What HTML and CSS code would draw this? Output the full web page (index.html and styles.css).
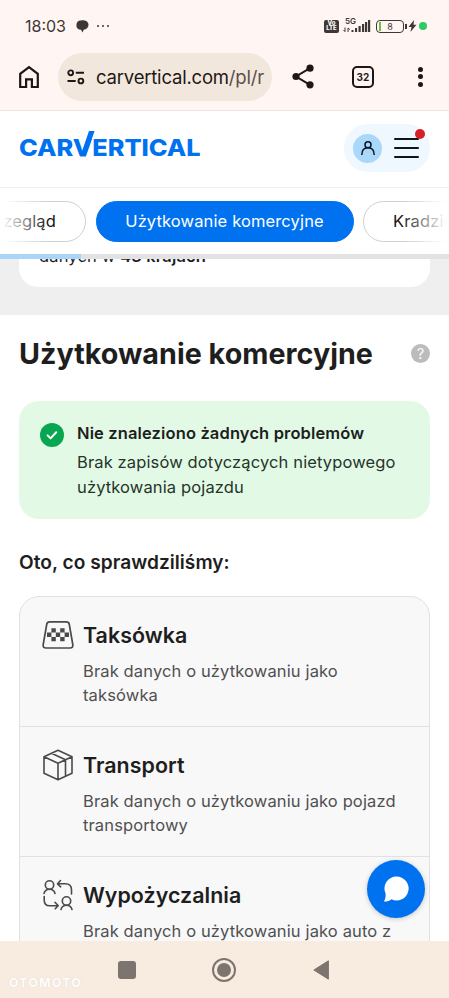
FILE: index.html
```html
<!DOCTYPE html>
<html lang="pl">
<head>
<meta charset="utf-8">
<meta name="viewport" content="width=device-width, initial-scale=1">
<title>carVertical – Użytkowanie komercyjne</title>
<link rel="stylesheet" href="styles.css">
</head>
<body>
<div class="phone">
  <div class="status">
    <span class="clock">18:03</span>
    <svg class="chat-ind" width="13" height="13" viewBox="0 0 13 13"><path d="M3 .8C5 0 9 0 11 1.500c2 1.500 2 5 0 6.800-.8.8-2 1.200-3.200 1.300L6.500 12.500 5 9.800C2 9.800.4 7.800.4 5.400.4 3 1.200 1.500 3 .8z" fill="#3d3836"/></svg>
    <span class="dots"><i></i><i></i><i></i></span>
    <span class="volte"><b>Vo</b><b>LTE</b></span>
    <span class="signal">
      <span class="net">5G</span>
      <svg width="28" height="14" viewBox="0 0 28 14"><g fill="#3d3836"><path d="M8.500 11h2v2h-2zM12 9h2.100v4H12zM15.500 7h2.200v6h-2.200zM19 5h2.200v8H19zM22 3h2.200v10H22zM25 1h2.200v12H25z"/></g><path d="M2 8.500v4M.5 11 2 12.700M5 13V9l1.800 1.500" stroke="#3d3836" fill="none"/></svg>
    </span>
    <span class="battery"><span>8</span></span>
    <svg class="bolt" width="9" height="12" viewBox="0 0 9 12"><path d="M6 0 .5 7h3L2.500 12 8.500 4.800h-3z" fill="#3d3836"/></svg>
    <span class="live"></span>
  </div>

  <div class="browser">
    <svg class="home" width="22" height="24" viewBox="0 0 22 24"><path d="M2.200 22V8.800L11 2.200l8.800 6.600V22h-5.900v-7.600H8.100V22z" fill="none" stroke="#1d1715" stroke-width="2.200"/></svg>
    <div class="address">
      <svg width="18" height="16" viewBox="0 0 18 16"><g fill="none" stroke="#1d1715" stroke-width="1.900"><circle cx="3.700" cy="3.800" r="2.400"/><path d="M8.800 3.800H17M.5 12h8.200"/><circle cx="13.900" cy="12" r="2.400"/></g></svg>
      <span class="url">carvertical.com<em>/pl/r</em></span>
    </div>
    <svg class="share" width="22" height="25" viewBox="0 0 22 25"><path d="m18 4.200-14 8.300 14 8.300" fill="none" stroke="#1d1715" stroke-width="2"/><g fill="#1d1715"><circle cx="18" cy="4.200" r="3.600"/><circle cx="4" cy="12.500" r="3.600"/><circle cx="18" cy="20.800" r="3.600"/></g></svg>
    <span class="tabcount">32</span>
    <span class="kebab"><i></i><i></i><i></i></span>
  </div>

  <header class="site">
    <div class="logo"><span class="word">CARVERTICAL</span><svg class="tick" width="20" height="26" viewBox="0 0 20 26"><path d="M13 0h5.600L9.800 25.500H4.200z" fill="#0072f0"/></svg></div>
    <div class="account">
      <span class="avatar"><svg width="16" height="16" viewBox="0 0 16 16"><g fill="none" stroke="#0c1622" stroke-width="1.500"><circle cx="8" cy="4.800" r="3"/><path d="M1.800 15c0-4.600 2.500-7.200 6.200-7.200s6.200 2.600 6.200 7.200"/></g></svg></span>
      <span class="burger"><i></i><i></i><i></i></span>
      <span class="alert"></span>
    </div>
  </header>

  <nav class="tabs">
    <a class="tab prev">Przegląd</a>
    <a class="tab active">Użytkowanie komercyjne</a>
    <a class="tab next">Kradzież</a>
  </nav>
  <div class="progress"><div class="bar"></div></div>

  <section class="previous"><div class="card"><p>danych w <b>43 krajach</b></p></div></section>

  <main>
    <div class="title"><h1>Użytkowanie komercyjne</h1><span class="help">?</span></div>
    <div class="notice">
      <svg width="24" height="24" viewBox="0 0 24 24"><circle cx="12" cy="12" r="12" fill="#08a650"/><path d="m7.600 12.400 3 3 5.600-6.100" fill="none" stroke="#fff" stroke-width="2" stroke-linecap="round" stroke-linejoin="round"/></svg>
      <div><h2>Nie znaleziono żadnych problemów</h2><p class="l1">Brak zapisów dotyczących nietypowego</p><p>użytkowania pojazdu</p></div>
    </div>
    <h3 class="lead">Oto, co sprawdziliśmy:</h3>
    <div class="list">
      <article>
        <svg class="ic" width="32" height="32" viewBox="0 0 32 32"><path d="M7.500 2.800h17c1.500 0 2.400.8 2.700 2.200L30.800 25.500c.4 2.400-.7 3.500-2.800 3.500H4c-2.100 0-3.200-1.100-2.800-3.500L4.800 5c.3-1.400 1.200-2.200 2.700-2.200z" fill="none" stroke="#4a4a4a" stroke-width="1.700"/><path d="M9.400 9.300h4.400v4.300H9.400zM18.200 9.300h4.400v4.300h-4.400zM5 13.600h4.400v4.300H5zM13.800 13.600h4.400v4.300h-4.400zM22.600 13.600H27v4.300h-4.400zM9.400 17.900h4.400v4.300H9.400zM18.200 17.900h4.400v4.300h-4.400z" fill="#4a4a4a"/></svg>
        <div><h4>Taksówka</h4><p>Brak danych o użytkowaniu jako</p><p>taksówka</p></div>
      </article>
      <article>
        <svg class="ic" width="32" height="32" viewBox="0 0 32 32"><g fill="none" stroke="#4a4a4a" stroke-width="1.600" stroke-linejoin="round"><path d="m16 1.200 14 6.500v16.500L16 30.700l-14-6.500V7.700zM2 7.700l14 6.500 14-6.500M16 14.200v16.500M9.500 4.300l14 6.500v16.400"/></g></svg>
        <div><h4>Transport</h4><p>Brak danych o użytkowaniu jako pojazd</p><p>transportowy</p></div>
      </article>
      <article>
        <svg class="ic" width="32" height="32" viewBox="0 0 32 32"><g fill="none" stroke="#4a4a4a" stroke-width="1.600" stroke-linecap="round" stroke-linejoin="round"><circle cx="7.500" cy="6" r="4.200"/><path d="M2 14.500c.7-2.800 2.700-4.200 5.500-4.200s4.800 1.400 5.500 4.200M18.500 1.500 15.500 4.800l3.200 3M15.800 4.800h7.500c4 0 6.200 2 6.200 6V15"/><circle cx="24.500" cy="22" r="4.200"/><path d="M19 30.500c.7-2.800 2.700-4.200 5.500-4.200s4.800 1.400 5.500 4.200M2.200 17.500V21c0 4 2 5.800 5.500 5.800h8M13 23.300l3.200 3.500-3 3"/></g></svg>
        <div><h4>Wypożyczalnia</h4><p>Brak danych o użytkowaniu jako auto z</p></div>
      </article>
    </div>
  </main>

  <footer class="sysnav">
    <span class="recent"></span>
    <span class="circle"><i></i></span>
    <svg class="back" width="17" height="20" viewBox="0 0 17 20"><path d="M15.400.8v18.400L.9 10z" fill="#7c746f" stroke="#7c746f" stroke-linejoin="round"/></svg>
    <span class="mark">OTOMOTO</span>
  </footer>
  <button class="fab" aria-label="Czat"><svg width="28" height="28" viewBox="0 0 28 28"><path d="M14.500 1.500a12 12 0 1 1-5.100 22.800c-1.400 1.600-4 2.200-7.600 2.300 1.400-2.200 2-4 1.800-8A12 12 0 0 1 14.500 1.500z" fill="#fff"/></svg></button>
</div>
</body>
</html>
```
FILE: styles.css
```css
* { box-sizing: border-box; }
body { margin: 0; font-family: Inter, sans-serif; color: #1e1e1e; background: #fff; }
h1, h2, h3, h4, p { margin: 0; white-space: nowrap; }
svg { display: block; flex: none; }
.phone { position: relative; width: 449px; height: 998px; overflow: hidden; display: flex; flex-direction: column; }
.phone > * { flex: none; }

.status { height: 52px; background: #fff6f3; display: flex; align-items: center; padding-left: 25px; color: #3d3836; }
.clock { font-size: 16px; width: 41px; white-space: nowrap; }
.chat-ind { margin-left: 10px; }
.dots { display: flex; gap: 3px; margin-left: 8px; width: 13px; }
.dots i { width: 2px; height: 2px; background: #3d3836; border-radius: 50%; }
.volte { margin-left: 214px; width: 15px; height: 13px; border-radius: 2px; background: #3d3836; color: #fff; font-size: 6px; line-height: 6px; text-align: center; display: flex; flex-direction: column; }
.volte b { font-weight: 800; height: 5.500px; }
.signal { position: relative; margin-left: 4px; }
.net { position: absolute; left: 2px; top: -2px; font-size: 8px; line-height: 9px; font-weight: 600; }
.battery { position: relative; margin-left: 5px; width: 28px; height: 13px; border: 1.500px solid #3d3836; border-radius: 4px; font-size: 9px; line-height: 11px; text-align: center; }
.battery::before { content: ""; position: absolute; left: 2px; top: 1px; width: 1.500px; height: 9px; background: #6fc13d; }
.battery::after { content: ""; position: absolute; right: -3.500px; top: 3px; width: 1.500px; height: 5px; background: #3d3836; }
.bolt { margin-left: 4px; }
.live { margin-left: 2px; width: 8px; height: 8px; border-radius: 50%; background: #2fca62; }

.browser { height: 59px; background: #fff6f3; border-bottom: 1px solid #ece4df; display: flex; align-items: center; padding: 0 0 9px 18px; }
.address { margin-left: 18px; width: 214px; height: 48px; border-radius: 24px; background: #f2e7dd; display: flex; align-items: center; padding-left: 9px; }
.url { margin-left: 11px; padding-top: 1px; font-size: 18.500px; letter-spacing: -.2px; color: #1d1715; white-space: nowrap; }
.url em { font-style: normal; color: #5a504b; }
.share { margin-left: 20px; }
.tabcount { margin-left: 38px; width: 22px; height: 22px; border: 2px solid #1d1715; border-radius: 5px; font-size: 10px; font-weight: 700; line-height: 18px; text-align: center; }
.kebab { margin-left: 44px; display: flex; flex-direction: column; gap: 2.500px; }
.kebab i { width: 5px; height: 5px; border-radius: 50%; background: #1d1715; }

.site { height: 77px; border-bottom: 1px solid #f0f0f0; display: flex; justify-content: space-between; align-items: center; padding: 0 19px; }
.logo { position: relative; width: 181px; height: 27px; color: #0072f0; margin-top: -3px; }
.word { display: block; font-size: 23.500px; font-weight: 800; line-height: 27px; transform-origin: 0 0; transform: scaleX(1.077); white-space: nowrap; }
.tick { position: absolute; left: 57px; top: -3px; }
.account { position: relative; width: 86px; height: 48px; margin-top: -2px; border-radius: 24px; background: #eff7ff; display: flex; align-items: center; padding-left: 9px; }
.avatar { width: 29px; height: 29px; border-radius: 50%; background: #a9d8fb; display: flex; align-items: center; justify-content: center; }
.burger { margin-left: 12px; width: 25px; display: flex; flex-direction: column; gap: 7px; }
.burger i { height: 2px; background: #10151b; border-radius: 1px; }
.alert { position: absolute; left: 71px; top: 5px; width: 10px; height: 10px; border-radius: 50%; background: #d71f26; }

.tabs { position: relative; height: 66px; display: flex; align-items: center; gap: 9.500px; overflow: hidden; }
.tab { height: 41px; border-radius: 21px; border: 1px solid #cfcfcf; font-size: 16.500px; letter-spacing: .13px; line-height: 39px; white-space: nowrap; flex: none; color: #161616; }
.prev { width: 130px; margin-left: -44px; padding-right: 29px; text-align: right; }
.active { width: 258px; background: #0072f0; border-color: #0072f0; color: #fff; text-align: center; }
.next { width: 130px; padding-left: 29px; }
.tabs::before, .tabs::after { content: ""; position: absolute; top: 0; bottom: 0; width: 48px; }
.tabs::before { left: 0; background: linear-gradient(to right, #fff 5%, #fff0); }
.tabs::after { right: 0; background: linear-gradient(to left, #fff 5%, #fff0); }
.progress { height: 5px; background: #e2e2e2; }
.bar { height: 5px; width: 81px; background: #a9d5f8; }

.previous { height: 56px; background: #efefef; padding: 0 19px; overflow: hidden; }
.card { height: 28px; background: #fff; border-radius: 0 0 19px 19px; padding-left: 20px; overflow: hidden; }
.card p { margin-top: -14px; font-size: 16.500px; letter-spacing: .15px; line-height: 22px; }
.card b { font-weight: 600; }

main { padding: 0 19px; height: 626px; overflow: hidden; }
.title { height: 86px; padding-bottom: 9px; display: flex; align-items: center; justify-content: space-between; }
h1 { font-size: 28.650px; letter-spacing: .04px; font-weight: 700; line-height: 36px; }
.help { width: 19px; height: 19px; border-radius: 50%; background: #bcbcbc; color: #fff; font-size: 14px; line-height: 19px; text-align: center; }
.notice { height: 117.500px; border-radius: 20px; background: #e2fae5; padding: 18px 0 0 21px; display: flex; gap: 13px; }
.notice svg { margin-top: 4px; }
.notice h2 { font-size: 16.500px; letter-spacing: .13px; font-weight: 600; line-height: 28px; }
.notice p { font-size: 16.500px; letter-spacing: .13px; line-height: 25px; color: #26342a; }
.notice .l1 { padding-top: 3px; }
.lead { margin-top: 29px; font-size: 19.100px; letter-spacing: .04px; font-weight: 600; line-height: 28px; }
.list { margin-top: 20px; border: 1px solid #e1e1e1; border-radius: 20px; background: #f8f8f8; height: 400px; }
article { height: 130.200px; border-bottom: 1px solid #e1e1e1; display: flex; gap: 9px; padding: 23px 0 0 22px; }
.ic { margin-top: -1px; }
h4 { font-size: 21.400px; letter-spacing: .04px; font-weight: 600; line-height: 30px; }
article p { font-size: 16.500px; letter-spacing: .13px; line-height: 24px; color: #505050; }
article h4 + p { margin-top: 9px; }

.sysnav { position: relative; height: 57px; background: #f8ebe0; display: flex; align-items: center; padding-left: 118px; }
.recent { width: 18px; height: 18px; border-radius: 3px; background: #7c746f; }
.circle { margin-left: 76px; width: 24px; height: 24px; border: 2px solid #7c746f; border-radius: 50%; display: flex; align-items: center; justify-content: center; }
.circle i { width: 14px; height: 14px; border-radius: 50%; background: #7c746f; }
.back { margin-left: 77px; }
.mark { position: absolute; left: 9px; top: 34px; color: #fff; font-size: 12px; line-height: 16px; font-weight: 700; letter-spacing: 1.500px; text-shadow: 0 0 1px #d8cbc0; }
.fab { position: absolute; left: 367px; top: 860px; width: 58px; height: 58px; border: 0; padding: 0; border-radius: 50%; background: #0072f0; display: flex; align-items: center; justify-content: center; box-shadow: 0 1px 5px #0003; }
```
